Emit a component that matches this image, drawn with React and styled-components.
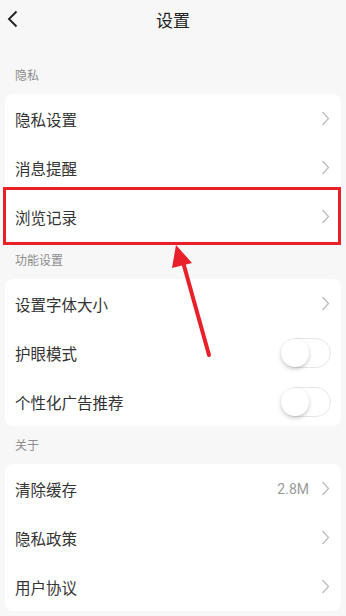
import React from 'react';
import styled, { createGlobalStyle } from 'styled-components';

const GlobalStyle = createGlobalStyle`
    body {
        margin: 0;
        background: #f7f7f7;
        font-family: "Noto Sans CJK SC", "Noto Sans", sans-serif;
    }
`;

const Page = styled.div`
    position: relative;
    min-height: 100vh;
    background: #f7f7f7;
    padding: 0 5px;
    box-sizing: border-box;
`;

const Header = styled.div`
    display: grid;
    grid-template-columns: 40px 1fr 40px;
    align-items: center;
    height: 38px;
    margin: 0 -5px 18px;
`;

const BackButton = styled.div`
    display: flex;
    align-items: center;
    padding-left: 7px;
`;

const Title = styled.div`
    text-align: center;
    font-size: 17px;
    color: #222;
`;

const SectionLabel = styled.div`
    padding: 11px 10px 11px;
    font-size: 12px;
    line-height: 16px;
    color: #8c8c8c;
`;

const Card = styled.div`
    background: #fff;
    border-radius: 8px;
`;

const Row = styled.div`
    position: relative;
    display: flex;
    align-items: center;
    height: 49px;
    padding: 0 11px 0 10px;

    ${({ $highlight }) => $highlight && `
        &::after {
            content: '';
            position: absolute;
            left: -2px;
            right: 0;
            top: -5px;
            bottom: -4px;
            border: 3.5px solid #e8202a;
            pointer-events: none;
        }
    `}
`;

const Label = styled.div`
    flex: 1;
    font-size: 15.5px;
    color: #333;
`;

const Value = styled.span`
    font-size: 14px;
    color: #9a9a9a;
    margin-right: 12px;
    font-family: "Roboto", "Noto Sans", sans-serif;
`;

const Track = styled.div`
    position: relative;
    width: 50px;
    height: 30px;
    border-radius: 15px;
    border: 1px solid #e6e6e6;
    box-sizing: border-box;
    background: #fff;
    margin-right: -1px;
`;

const Knob = styled.div`
    position: absolute;
    left: -1px;
    top: 0;
    width: 28px;
    height: 28px;
    border-radius: 50%;
    background: #fff;
    box-shadow: 0 2px 4px rgba(0, 0, 0, 0.22);
`;

const Overlay = styled.svg`
    position: absolute;
    left: 0;
    top: 0;
    pointer-events: none;
`;

const Chevron = () => (
    <svg width="9" height="15" viewBox="0 0 9 15">
        <path d="M1.5 1 L7.5 7.5 L1.5 14" fill="none" stroke="#bdbdbd" strokeWidth="1.3" />
    </svg>
);

const Switch = () => (
    <Track>
        <Knob />
    </Track>
);

const sections = [
    {
        title: '隐私',
        rows: [
            { label: '隐私设置' },
            { label: '消息提醒' },
            { label: '浏览记录', highlight: true },
        ],
    },
    {
        title: '功能设置',
        rows: [
            { label: '设置字体大小' },
            { label: '护眼模式', toggle: true },
            { label: '个性化广告推荐', toggle: true },
        ],
    },
    {
        title: '关于',
        rows: [
            { label: '清除缓存', value: '2.8M' },
            { label: '隐私政策' },
            { label: '用户协议' },
        ],
    },
];

export default function App() {
    return (
        <>
            <GlobalStyle />
            <Page>
                <Header>
                    <BackButton>
                        <svg width="12" height="18" viewBox="0 0 12 18">
                            <path d="M9.5 1.5 L2 9 L9.5 16.5" fill="none" stroke="#222" strokeWidth="1.9" />
                        </svg>
                    </BackButton>
                    <Title>设置</Title>
                    <div />
                </Header>
                {sections.map((section) => (
                    <React.Fragment key={section.title}>
                        <SectionLabel>{section.title}</SectionLabel>
                        <Card>
                            {section.rows.map((row) => (
                                <Row key={row.label} $highlight={row.highlight}>
                                    <Label>{row.label}</Label>
                                    {row.value && <Value>{row.value}</Value>}
                                    {row.toggle ? <Switch /> : <Chevron />}
                                </Row>
                            ))}
                        </Card>
                    </React.Fragment>
                ))}
                <Overlay width="346" height="616" viewBox="0 0 346 616">
                    <line x1="209" y1="355" x2="183" y2="262" stroke="#e8202a" strokeWidth="4" strokeLinecap="round" />
                    <polygon points="176,245 172,268 192,263" fill="#e8202a" />
                </Overlay>
            </Page>
        </>
    );
}
